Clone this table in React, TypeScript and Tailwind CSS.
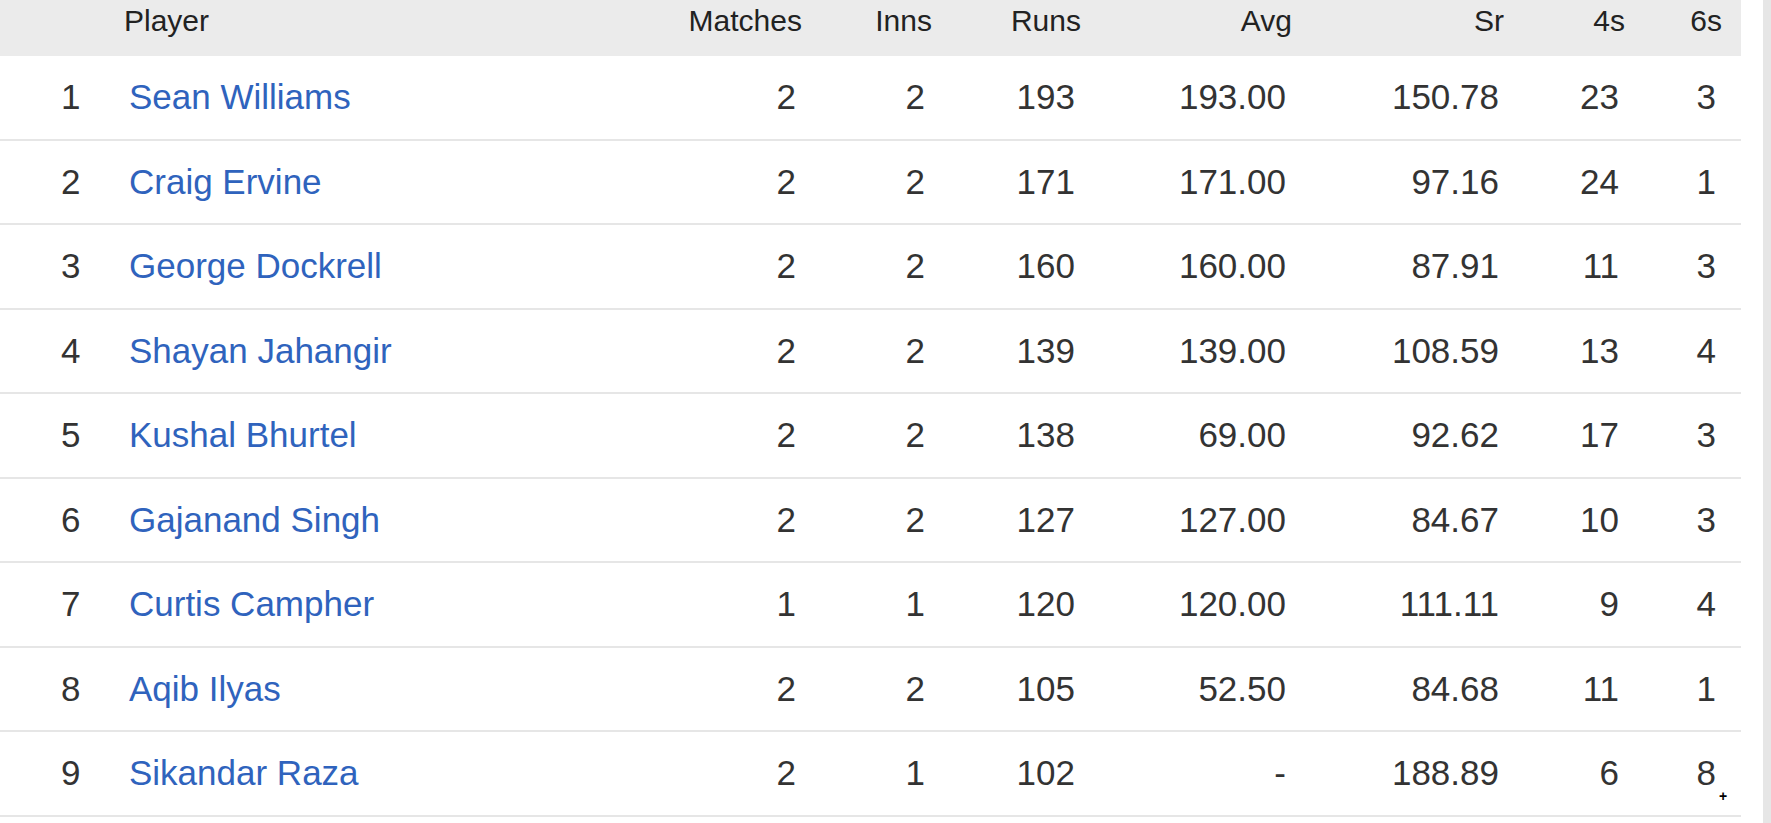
const players = [
  { rank: 1, name: "Sean Williams", matches: 2, inns: 2, runs: 193, avg: "193.00", sr: "150.78", fours: 23, sixes: 3 },
  { rank: 2, name: "Craig Ervine", matches: 2, inns: 2, runs: 171, avg: "171.00", sr: "97.16", fours: 24, sixes: 1 },
  { rank: 3, name: "George Dockrell", matches: 2, inns: 2, runs: 160, avg: "160.00", sr: "87.91", fours: 11, sixes: 3 },
  { rank: 4, name: "Shayan Jahangir", matches: 2, inns: 2, runs: 139, avg: "139.00", sr: "108.59", fours: 13, sixes: 4 },
  { rank: 5, name: "Kushal Bhurtel", matches: 2, inns: 2, runs: 138, avg: "69.00", sr: "92.62", fours: 17, sixes: 3 },
  { rank: 6, name: "Gajanand Singh", matches: 2, inns: 2, runs: 127, avg: "127.00", sr: "84.67", fours: 10, sixes: 3 },
  { rank: 7, name: "Curtis Campher", matches: 1, inns: 1, runs: 120, avg: "120.00", sr: "111.11", fours: 9, sixes: 4 },
  { rank: 8, name: "Aqib Ilyas", matches: 2, inns: 2, runs: 105, avg: "52.50", sr: "84.68", fours: 11, sixes: 1 },
  { rank: 9, name: "Sikandar Raza", matches: 2, inns: 1, runs: 102, avg: "-", sr: "188.89", fours: 6, sixes: 8 },
];

// column widths taken off the screenshot
const cols = "grid grid-cols-[116px_484px_202px_130px_149px_211px_212px_121px_97px_19px]";

const App = () => {
  return (
    <div className="flex w-[1771px] h-[823px] bg-white text-[#333] font-['Liberation_Sans',Arial,sans-serif] overflow-hidden">
      <div className="relative w-[1741px]">
        {/* header */}
        <div className={`${cols} h-[56px] bg-[#ebebeb] text-[#222] text-[30px] leading-[34px] pt-[4px]`}>
          <div />
          <div className="pl-[8px]">Player</div>
          <div className="text-right">Matches</div>
          <div className="text-right">Inns</div>
          <div className="text-right">Runs</div>
          <div className="text-right">Avg</div>
          <div className="text-right">Sr</div>
          <div className="text-right">4s</div>
          <div className="text-right">6s</div>
          <div />
        </div>

        {/* rows */}
        {players.map((p) => (
          <div
            key={p.rank}
            className={`${cols} h-[84.5px] items-center border-b-2 border-[#e6e6e6] text-[35px] leading-[40px]`}
          >
            <div className="pl-[61px]">{p.rank}</div>
            <div className="pl-[13px] text-[#2f63bd]">{p.name}</div>
            <div className="text-right pr-[6px]">{p.matches}</div>
            <div className="text-right pr-[7px]">{p.inns}</div>
            <div className="text-right pr-[6px]">{p.runs}</div>
            <div className="text-right pr-[6px]">{p.avg}</div>
            <div className="text-right pr-[5px]">{p.sr}</div>
            <div className="text-right pr-[6px]">{p.fours}</div>
            <div className="text-right pr-[6px]">{p.sixes}</div>
            <div />
          </div>
        ))}

        {/* mouse cursor left in the shot */}
        <span className="absolute left-[1719px] top-[789px] text-[14px] font-bold leading-none text-black">+</span>
      </div>
      <div className="w-[22px]" />
      <div className="w-[8px] h-full bg-[#e6e6e6]" />
    </div>
  );
};

export default App;
